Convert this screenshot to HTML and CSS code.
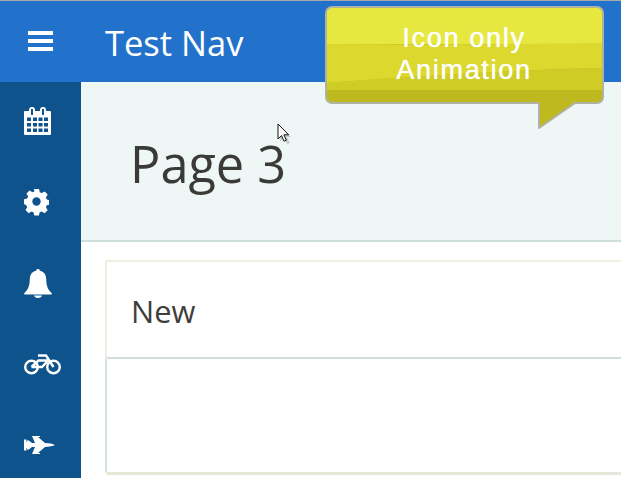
FILE: index.html
```html
<!DOCTYPE html>
<html lang="en">
<head>
<meta charset="utf-8">
<title>Test Nav</title>
<link rel="stylesheet" href="styles.css">
</head>
<body>
<div class="app">
  <header class="topbar">
    <button class="burger" aria-label="menu">
      <svg width="25" height="21" viewBox="0 0 25 21"><path fill="#fff" d="M0 0h25v4H0zM0 8h25v4H0zM0 16h25v4H0z"/></svg>
    </button>
    <div class="brand">Test Nav</div>
  </header>
  <div class="body">
    <nav class="side">
      <a class="side-item"><svg width="27" height="28" viewBox="0 0 27 28"><path fill="#fff" fill-rule="evenodd" d="M1 4h4V3a3 3 0 0 1 3-3 3 3 0 0 1 3 3v1h5V3a3 3 0 0 1 3-3 3 3 0 0 1 3 3v1h4a1 1 0 0 1 1 1v22a1 1 0 0 1-1 1H1a1 1 0 0 1-1-1V5a1 1 0 0 1 1-1zM7 2v6h2V2zM18 2v6h2V2zM3 10.500V14h4v-3.500zM9 10.500V14h4v-3.500zM14.500 10.500V14h4v-3.500zM20 10.500V14h4v-3.500zM3 16v3.500h4V16zM9 16v3.500h4V16zM14.500 16v3.500h4V16zM20 16v3.500h4V16zM3 21.500V25h4v-3.500zM9 21.500V25h4v-3.500zM14.500 21.500V25h4v-3.500zM20 21.500V25h4v-3.500z"/></svg></a>
      <a class="side-item"><svg width="25" height="27" viewBox="0 0 25 27"><path fill="#fff" fill-rule="evenodd" d="M10 0h5l.8 3.300 2 .8L20.700 2.400l3 3.200-1.800 2.800.9 2 3.200.7v4.400l-3.200.8-.9 2 1.800 2.900-3.100 3-2.900-1.700-2 .8-.8 3.200h-4.600l-.8-3.200-2-.8-2.800 1.700-3.200-3.100 1.700-2.800-.9-2L0 14.900v-4.700l3.200-.7.900-2.100-1.700-2.800 3.200-3 2.800 1.700 2-.8zM12.500 8.300a4.200 4.200 0 1 0 0 8.400 4.200 4.200 0 0 0 0-8.400z"/></svg></a>
      <a class="side-item"><svg width="28" height="29" viewBox="0 0 28 29"><path fill="#fff" d="M14 0c1.100 0 1.800.7 1.800 1.700 3.900.7 6.200 3.600 6.400 7.800.2 6.700.9 10.300 5.800 15.100 0 .6-.3.900-1 .9H1c-.7 0-1-.3-1-.9 4.900-4.800 5.600-8.400 5.800-15.100.2-4.200 2.500-7.100 6.400-7.800C12.200.7 12.900 0 14 0zM10 26.500h8c-.3 1.500-2 2.500-4 2.500s-3.700-1-4-2.500z"/></svg></a>
      <a class="side-item"><svg width="37" height="21" viewBox="0 0 37 21"><g fill="none" stroke="#fff" stroke-width="2.400"><circle cx="7.500" cy="13" r="6.300"/><circle cx="29.500" cy="13" r="6.300"/><path d="M7.500 13L14.500 6.500H24.500M14 1.500h8L29.500 13M7.500 13H18L24.500 6"/></g></svg></a>
      <a class="side-item"><svg width="31" height="18" viewBox="0 0 31 18"><path fill="#fff" d="M31 9c-2-1.200-6-1.800-10-2L14 1h2V0H8l3 7H8L4.800 4.500H3V6h-.5V3.500H0v11h2.500V12H3v1.500h1.800L8 11h3L8 18h8v-1h-2l7-6c4-.2 8-.8 10-2z"/></svg></a>
    </nav>
    <main class="main">
      <section class="page-head"><h1 class="page-title">Page 3</h1></section>
      <section class="content">
        <div class="card">
          <div class="card-head">New</div>
          <div class="card-body"></div>
        </div>
      </section>
    </main>
  </div>
  <aside class="callout">
    <svg class="callout-bg" width="280" height="124" viewBox="0 0 280 124">
      <defs>
        <clipPath id="shape"><path d="M7 1H272a6 6 0 0 1 6 6V91a6 6 0 0 1-6 6H250L214 122V97H7a6 6 0 0 1-6-6V7a6 6 0 0 1 6-6z"/></clipPath>
      </defs>
      <g clip-path="url(#shape)">
        <rect width="280" height="124" fill="#bdb91e"/>
        <path fill="#e7e83f" d="M0 0h280v38H0z"/>
        <path fill="#dcd82e" d="M0 38C100 39 200 38 280 37V62C180 64 90 70 0 77z"/>
        <path fill="#cfcd25" d="M0 77C90 70 190 64 280 62V84H0z"/>
      </g>
      <path fill="none" stroke="#b0b2a2" stroke-width="2" stroke-linejoin="round" d="M7 1H272a6 6 0 0 1 6 6V91a6 6 0 0 1-6 6H250L214 122V97H7a6 6 0 0 1-6-6V7a6 6 0 0 1 6-6z"/>
    </svg>
    <div class="callout-text">Icon only<br>Animation</div>
  </aside>
  <svg class="cursor" width="14" height="21" viewBox="0 0 14 21"><path fill="#b9bdbd" opacity=".7" d="M3 3l0 15 4-3 3 6 3-1-3-6h4z"/><path fill="#fff" stroke="#111" stroke-width="1" d="M1 1v15l3.500-3.400 2.500 5.600 2.400-1-2.500-5.400h4.800z"/></svg>
</div>
</body>
</html>
```
FILE: styles.css
```css
* { box-sizing: border-box; }
html, body { margin: 0; height: 100%; overflow: hidden; }
body { background: #fff; font-family: "Open Sans", "Noto Sans", sans-serif; color: #3a3a36; }
.app { position: relative; width: 621px; height: 478px; display: flex; flex-direction: column; overflow: hidden; }
.topbar { height: 82px; flex: none; display: flex; background: #2272cc; border-top: 1px solid #a8a9a9; }
.burger { width: 81px; padding: 0; border: 0; background: transparent; display: flex; align-items: center; justify-content: center; }
.brand { padding-left: 24px; font-size: 34.500px; line-height: 84px; color: #fff; }
.body { flex: 1; display: flex; min-height: 0; }
.side { width: 81px; flex: none; background: #0f538d; display: flex; flex-direction: column; }
.side-item { height: 81px; flex: none; display: flex; align-items: center; padding: 0 0 3px 24px; }
.main { flex: 1; min-width: 0; display: flex; flex-direction: column; }
.page-head { height: 160px; flex: none; background: #eff7f6; border-bottom: 2px solid #cfe0dc; padding: 47px 0 0 49px; }
.page-title { margin: 0; font-size: 50.500px; line-height: 70px; font-weight: 400; color: #3a3a36; }
.content { flex: 1; padding: 19px 0 0 24px; }
.card { height: 215px; margin-top: -1px; margin-right: -6px; background: #fff; border: 2px solid #edefdf; border-right: 0; border-radius: 3px 0 0 3px; border-bottom: 3px solid #e5e8d8; }
.card-head { height: 97px; padding: 29px 0 0 24px; font-size: 30.800px; line-height: 40px; color: #3e3e3a; border-bottom: 2px solid #cfdfdc; }
.card-body { height: 113px; margin-left: -2px; border-left: 2px solid #d5e3e0; }
.callout { position: absolute; left: 325px; top: 6px; width: 280px; height: 124px; }
.callout-bg { display: block; }
.callout-text { position: absolute; left: 0; top: 16px; width: 278px; text-align: center; font-family: "Liberation Sans", Arial, sans-serif; font-size: 27px; line-height: 32px; letter-spacing: 1.700px; color: #fff; text-shadow: 0 0 1px #fff; }
.cursor { position: absolute; left: 277px; top: 123px; }
```
